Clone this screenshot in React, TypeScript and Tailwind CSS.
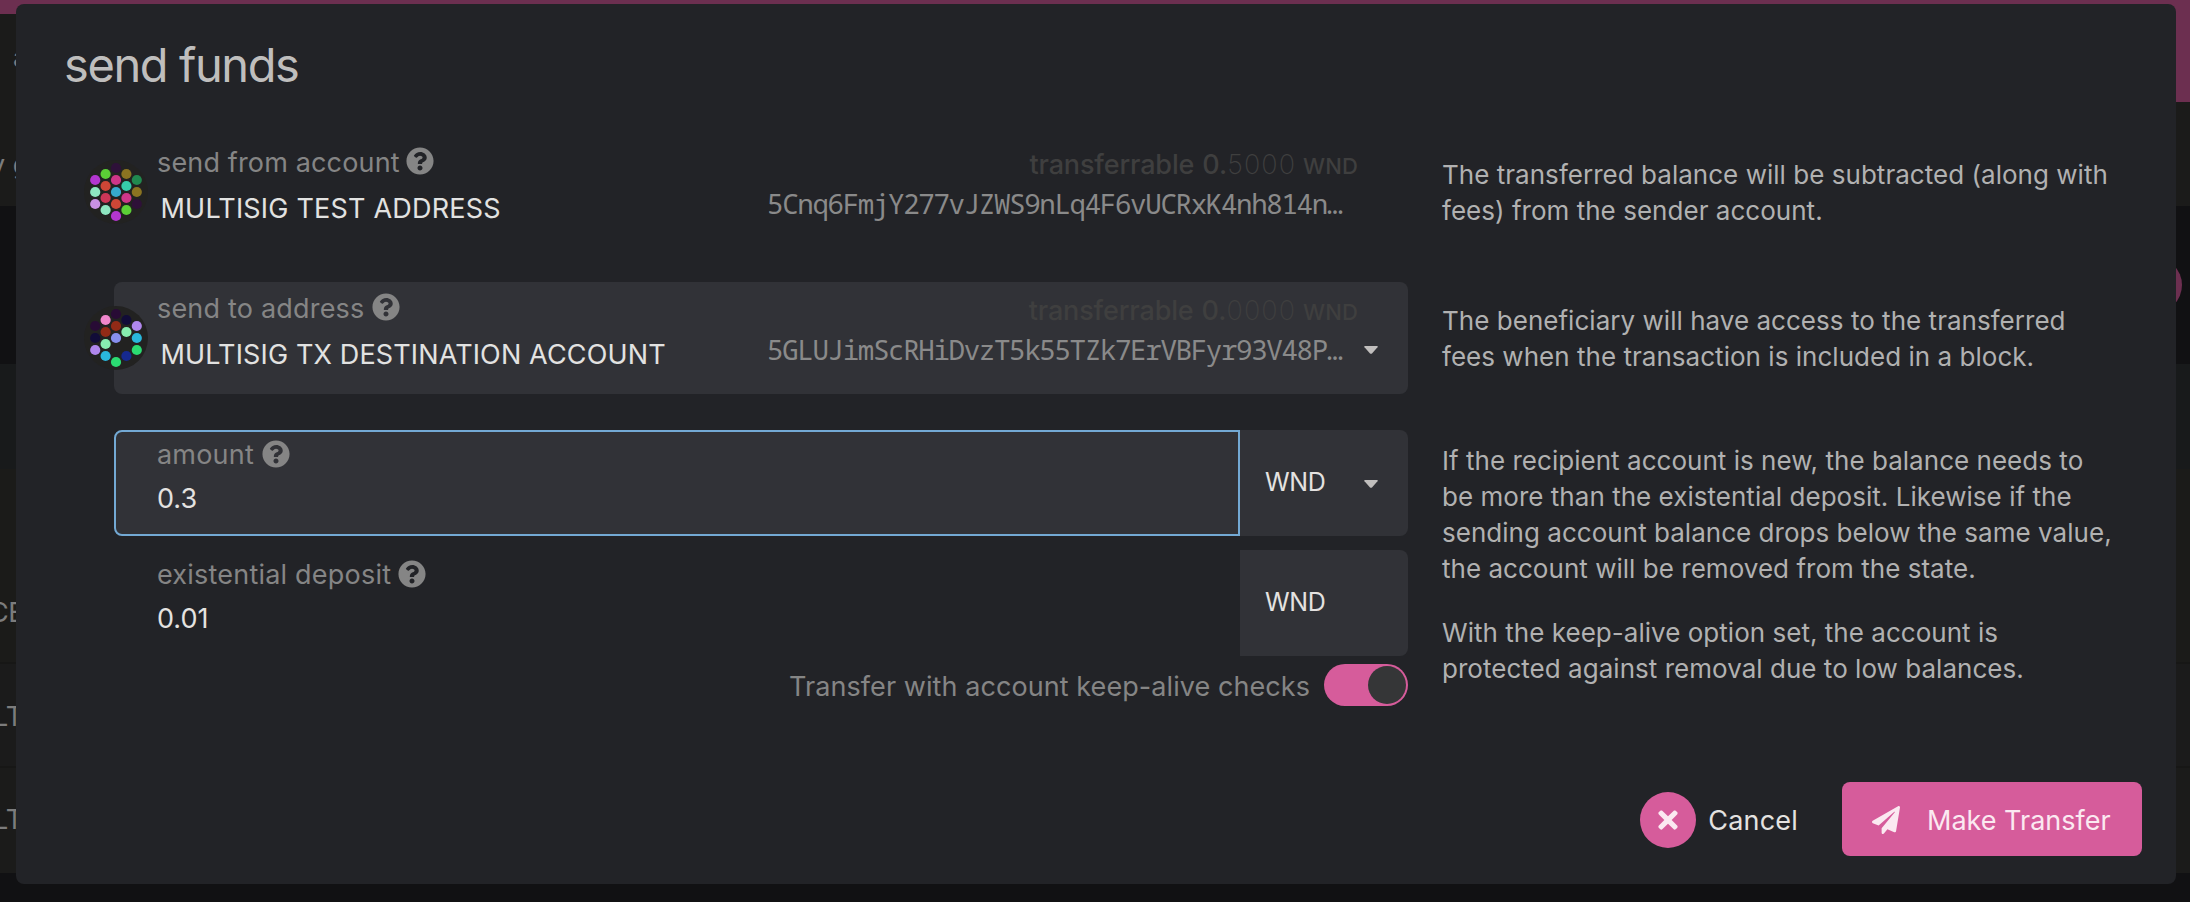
import type { ReactNode } from "react";
import { FaPaperPlane, FaQuestionCircle, FaTimes } from "react-icons/fa";

type Dot = [column: number, row: number, color: string];

const SENDER_DOTS: Dot[] = [
  [-2, -1, "#b336cf"], [-2, 0, "#8ee6c0"], [-2, 1, "#c890e3"],
  [-1, -1.5, "#5bcf36"], [-1, -0.5, "#cd4636"], [-1, 0.5, "#cd3657"], [-1, 1.5, "#8ee6c0"],
  [0, -2, "#2e1138"], [0, -1, "#cd3688"], [0, 0, "#36a9cd"], [0, 1, "#cd4636"], [0, 2, "#b336cf"],
  [1, -1.5, "#8b7421"], [1, -0.5, "#36cdab"], [1, 0.5, "#cd3688"], [1, 1.5, "#5bcf36"],
  [2, -1, "#21894f"], [2, 0, "#8b7421"], [2, 1, "#2e1138"],
];

const RECIPIENT_DOTS: Dot[] = [
  [-2, -1, "#280b35"], [-2, 0, "#110c38"], [-2, 1, "#b087ed"],
  [-1, -1.5, "#f087cb"], [-1, -0.5, "#922a16"], [-1, 0.5, "#87edb0"], [-1, 1.5, "#29b7dc"],
  [0, -2, "#280b35"], [0, -1, "#922a16"], [0, 0, "#878fee"], [0, 2, "#2bdb72"],
  [1, -1.5, "#110c38"], [1, -0.5, "#87edb0"], [1, 1.5, "#16298f"],
  [2, -1, "#b087ed"], [2, 0, "#29b7dc"], [2, 1, "#2bdb72"],
];

function Identicon({ dots }: { dots: Dot[] }) {
  return (
    <svg viewBox="-32 -32 64 64" className="absolute -left-[30px] top-6 size-16">
      <circle r="32" fill="#222221" />
      {dots.map(([column, row, color]) => (
        <circle key={`${column}:${row}`} cx={column * 10.4} cy={row * 12} r="5.1" fill={color} />
      ))}
    </svg>
  );
}

function Caret() {
  return (
    <svg viewBox="0 0 14 8" className="h-2 w-3.5 shrink-0">
      <path d="M1 0h12q1.3.2.5 1.3L8 7.4q-1 .9-2 0L.5 1.3Q-.3.2 1 0Z" fill="#c0bebd" />
    </svg>
  );
}

function Label({ children, iconClass = "", className = "" }: { children: ReactNode; iconClass?: string; className?: string }) {
  return (
    <div className={`flex h-9 items-center text-[27px] leading-9 text-[#858585] ${className}`}>
      <span className="pt-0.5">{children}</span>
      <FaQuestionCircle className={`size-7 ${iconClass}`} />
    </div>
  );
}

interface AccountFieldProps {
  label: string;
  labelClass: string;
  name: string;
  nameClass: string;
  address: string;
  decimals: string;
  dots: Dot[];
  selectable?: boolean;
}

function AccountField({ label, labelClass, name, nameClass, address, decimals, dots, selectable }: AccountFieldProps) {
  return (
    <div className={`relative flex h-28 rounded-lg pl-[43px] ${selectable ? "bg-[#313237]" : ""}`}>
      <Identicon dots={dots} />
      <div className="pt-2">
        <Label iconClass="-mt-[3px]" className={labelClass}>{label}</Label>
        <div className={`mt-[11px] pl-[3.5px] text-[27px] leading-9 text-[#e2e2e1] ${nameClass}`}>{name}</div>
      </div>
      <div className="ml-auto w-[591px] pt-[11px]">
        <div className="flex h-9 items-baseline justify-end text-[27px] leading-9 text-[#3f3f3f]">
          <span className="font-medium tracking-[-0.15px]">transferrable</span>
          <span className="ml-2 font-medium">0.</span>
          <span className="font-extralight tracking-[1.1px]">{decimals}</span>
          <span className="ml-[7px] text-[22px] font-medium tracking-[0.1px]">WND</span>
        </div>
        <div className="mt-[3px] whitespace-nowrap font-['Noto_Sans_Mono','DejaVu_Sans_Mono',monospace] text-[27.5px] leading-9 tracking-[-1.37px] text-[#8a8a8a]">
          {address}
        </div>
      </div>
      <div className="w-[50px] pl-1.5 pt-16">{selectable && <Caret />}</div>
    </div>
  );
}

function Unit({ selectable }: { selectable?: boolean }) {
  return (
    <div className="flex h-[106px] w-[168px] items-center justify-between rounded-r-lg bg-[#313237] pl-[25px] pr-[30px]">
      <span className="text-[25px] tracking-[-0.3px] text-[#e4e2e0]">WND</span>
      {selectable && <div className="pt-0.5"><Caret /></div>}
    </div>
  );
}

function Help({ children, className }: { children: ReactNode; className: string }) {
  return (
    <div className={`flex flex-col gap-7 whitespace-nowrap text-[26px] leading-9 tracking-[0.03px] text-[#b1b1b1] ${className}`}>
      {children}
    </div>
  );
}

function Backdrop() {
  return (
    <div className="flex h-[902px] flex-col bg-[#111113] text-[27px] leading-9 text-[#7c7c7c]">
      <div className="flex h-[206px] justify-between bg-[#6c2f50]">
        <div className="mt-3.5 h-[192px] w-[1100px] bg-[#1b1b1a]">
          <div className="ml-[13px] mt-[26px]">a</div>
          <div className="-ml-2.5 mt-[71px] whitespace-nowrap">y ga</div>
        </div>
        <div className="mt-[102px] h-[104px] w-[1090px] bg-[#1b1b1a]" />
      </div>
      <div className="flex h-[158px] items-center justify-end bg-[#111113] pr-2">
        <div className="size-14 rounded-full bg-[#6c2f50]" />
      </div>
      <div className="h-[105px] bg-[#181a1b]" />
      <div className="h-[195px] border-b-2 border-[#171716] bg-[#1b1b19] pt-[126px]">
        <div className="-ml-[11px] tracking-[-0.5px]">CE</div>
      </div>
      <div className="h-[104px] border-b-2 border-[#171716] bg-[#1b1b1b] pt-[35px]">
        <div className="-ml-[7px]">LT</div>
      </div>
      <div className="h-[105px] bg-[#1b1b1a] pt-[34px]">
        <div className="-ml-[7px]">LT</div>
      </div>
    </div>
  );
}

export default function App() {
  return (
    <div className="relative h-[902px] w-[2190px] overflow-hidden font-['Inter','Liberation_Sans',sans-serif]">
      <Backdrop />
      <div className="absolute left-4 top-1 flex h-[880px] w-[2160px] flex-col rounded-lg bg-[#222327] pb-7 pl-[98px] pr-[34px] pt-[31px]">
        <h1 className="-ml-[50px] text-[47px] leading-[60px] tracking-[-1.4px] text-[#bfbebd]">send funds</h1>

        <div className="mt-[41px] grid grid-cols-[1294px_680px] gap-x-[34px]">
          <AccountField
            label="send from account"
            labelClass="gap-1.5 tracking-[0.15px]"
            name="MULTISIG TEST ADDRESS"
            nameClass="tracking-[0.2px]"
            address="5Cnq6FmjY277vJZWS9nLq4F6vUCRxK4nh814n…"
            decimals="5000"
            dots={SENDER_DOTS}
          />
          <Help className="pt-[21px]">
            <p>The transferred balance will be subtracted (along with<br />fees) from the sender account.</p>
          </Help>

          <div className="mt-[34px]">
            <AccountField
              label="send to address"
              labelClass="gap-2 tracking-[0.19px]"
              name="MULTISIG TX DESTINATION ACCOUNT"
              nameClass="tracking-[0.14px]"
              address="5GLUJimScRHiDvzT5k55TZk7ErVBFyr93V48P…"
              decimals="0000"
              dots={RECIPIENT_DOTS}
              selectable
            />
          </div>
          <Help className="mt-[34px] pt-[21px]">
            <p>The beneficiary will have access to the transferred<br />fees when the transaction is included in a block.</p>
          </Help>

          <div className="mt-9">
            <div className="flex">
              <div className="h-[106px] w-[1126px] rounded-l-lg border-2 border-[#73a9d4] bg-[#313237] pl-[41px] pt-1">
                <Label className="gap-2 tracking-[0.2px]">amount</Label>
                <div className="mt-[9px] text-[27px] leading-9 text-[#e4e2e0]">0.3</div>
              </div>
              <Unit selectable />
            </div>
            <div className="mt-3.5 flex">
              <div className="h-[106px] w-[1126px] pl-[43px] pt-1.5">
                <Label className="gap-[7px] tracking-[0.21px]">existential deposit</Label>
                <div className="mt-[9px] text-[27px] leading-9 text-[#e4e2e0]">0.01</div>
              </div>
              <Unit />
            </div>
            <div className="mt-2 flex items-center justify-end gap-3.5">
              <span className="pt-[3px] text-[27px] leading-[39px] tracking-[0.07px] text-[#858585]">
                Transfer with account keep-alive checks
              </span>
              <div className="flex h-[42px] w-[84px] justify-end rounded-full bg-[#d65c9b] p-0.5">
                <div className="size-[38px] rounded-full bg-[#353637]" />
              </div>
            </div>
          </div>
          <Help className="mt-9 pt-[13px]">
            <p>
              If the recipient account is new, the balance needs to<br />
              be more than the existential deposit. Likewise if the<br />
              sending account balance drops below the same value,<br />
              the account will be removed from the state.
            </p>
            <p>With the keep-alive option set, the account is<br />protected against removal due to low balances.</p>
          </Help>
        </div>

        <div className="mt-auto flex items-center justify-end">
          <button className="flex items-center gap-3 pt-0.5">
            <span className="flex size-14 items-center justify-center rounded-full bg-[#d65c9b] text-[#fbe9f1]">
              <FaTimes className="size-7" />
            </span>
            <span className="pt-0.5 text-[27px] leading-9 tracking-[0.2px] text-[#e4e2e0]">Cancel</span>
          </button>
          <button className="ml-11 flex h-[74px] w-[300px] items-center gap-[27px] rounded-lg bg-[#d65c9b] pl-[30px] pt-0.5 text-[#fbe9f1]">
            <FaPaperPlane className="size-7" />
            <span className="pt-0.5 text-[27px] leading-9">Make Transfer</span>
          </button>
        </div>
      </div>
    </div>
  );
}
